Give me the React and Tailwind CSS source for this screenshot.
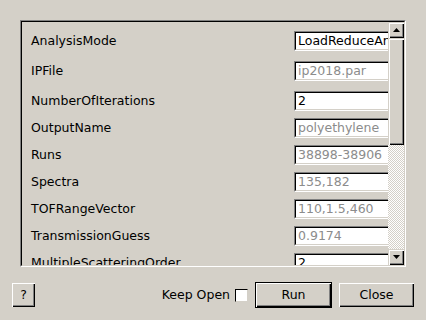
import React from "react";

const rows = [
  { label: "AnalysisMode", value: "LoadReduceAnalyse", enabled: true, h: "h-[30px]" },
  { label: "IPFile", value: "ip2018.par", enabled: false, h: "h-[30px]" },
  { label: "NumberOfIterations", value: "2", enabled: true, h: "h-[27px]" },
  { label: "OutputName", value: "polyethylene", enabled: false, h: "h-[27px]" },
  { label: "Runs", value: "38898-38906", enabled: false, h: "h-[27px]" },
  { label: "Spectra", value: "135,182", enabled: false, h: "h-[27px]" },
  { label: "TOFRangeVector", value: "110,1.5,460", enabled: false, h: "h-[27px]" },
  { label: "TransmissionGuess", value: "0.9174", enabled: false, h: "h-[27px]" },
  { label: "MultipleScatteringOrder", value: "2", enabled: true, h: "h-[27px]" },
];

function Arrow({ up }) {
  return (
    <svg width="7" height="4" viewBox="0 0 7 4">
      {up ? <polygon points="3.5,0 7,4 0,4" fill="#000" /> : <polygon points="0,0 7,0 3.5,4" fill="#000" />}
    </svg>
  );
}

export default function App() {
  return (
    <div
      className="w-[426px] h-[320px] bg-[#d4d0c8] flex flex-col text-[12.5px] text-black overflow-hidden"
      style={{ fontFamily: '"DejaVu Sans", sans-serif' }}
    >
      <div className="mt-[20px] mx-[20px] h-[247px] border-t border-l border-[#808080] border-r-white border-b-white border-r border-b">
        <div className="h-full border-t border-l border-black border-r border-b border-r-[#d4d0c8] border-b-[#d4d0c8] flex">
          <div className="flex-1 overflow-hidden pt-[9px] flex flex-col">
            {rows.map((r) => (
              <div key={r.label} className={`${r.h} shrink-0 flex items-start pl-[9px]`}>
                <div className="w-[263px] shrink-0 h-[20px] leading-[20px] whitespace-nowrap">{r.label}</div>
                <div className="w-[110px] shrink-0 h-[20px] border-t border-l border-[#808080] border-r border-b border-r-white border-b-white">
                  <div
                    className={`h-full bg-white border-t border-l border-black border-r border-b border-r-[#d4d0c8] border-b-[#d4d0c8] pl-[2px] leading-[16px] whitespace-nowrap overflow-hidden ${
                      r.enabled ? "text-black" : "text-[#8c8c8c]"
                    }`}
                  >
                    {r.value}
                  </div>
                </div>
              </div>
            ))}
          </div>
          <div className="w-[16px] shrink-0 flex flex-col">
            <div className="h-[16px] shrink-0 bg-[#d4d0c8] flex items-center justify-center shadow-[inset_1px_1px_0_#d4d0c8,inset_2px_2px_0_#ffffff,inset_-1px_-1px_0_#000000,inset_-2px_-2px_0_#808080]">
              <Arrow up />
            </div>
            <div className="h-[107px] shrink-0 bg-[#d4d0c8] shadow-[inset_1px_1px_0_#d4d0c8,inset_2px_2px_0_#ffffff,inset_-1px_-1px_0_#000000,inset_-2px_-2px_0_#808080]" />
            <div className="flex-1 bg-[image:repeating-conic-gradient(#d4d0c8_0_25%,#ffffff_0_50%)] bg-[length:2px_2px]" />
            <div className="h-[16px] shrink-0 bg-[#d4d0c8] flex items-center justify-center shadow-[inset_1px_1px_0_#d4d0c8,inset_2px_2px_0_#ffffff,inset_-1px_-1px_0_#000000,inset_-2px_-2px_0_#808080]">
              <Arrow />
            </div>
          </div>
        </div>
      </div>
      <div className="mt-[15px] h-[26px] px-[12px] flex items-center">
        <div className="w-[23px] h-[24px] flex items-center justify-center shadow-[inset_1px_1px_0_#ffffff,inset_-1px_-1px_0_#000000,inset_-2px_-2px_0_#808080]">
          ?
        </div>
        <div className="flex-1" />
        <span className="mr-[5px]">Keep Open</span>
        <div className="w-[13px] h-[13px] bg-white border-t border-l border-black border-r border-b border-r-[#d4d0c8] border-b-[#d4d0c8] mr-[7px]" />
        <div className="w-[77px] h-[26px] border border-black mr-[7px]">
          <div className="w-full h-full flex items-center justify-center shadow-[inset_1px_1px_0_#ffffff,inset_-1px_-1px_0_#000000,inset_-2px_-2px_0_#808080]">
            Run
          </div>
        </div>
        <div className="w-[75px] h-[24px] flex items-center justify-center shadow-[inset_1px_1px_0_#ffffff,inset_-1px_-1px_0_#000000,inset_-2px_-2px_0_#808080]">
          Close
        </div>
      </div>
    </div>
  );
}
